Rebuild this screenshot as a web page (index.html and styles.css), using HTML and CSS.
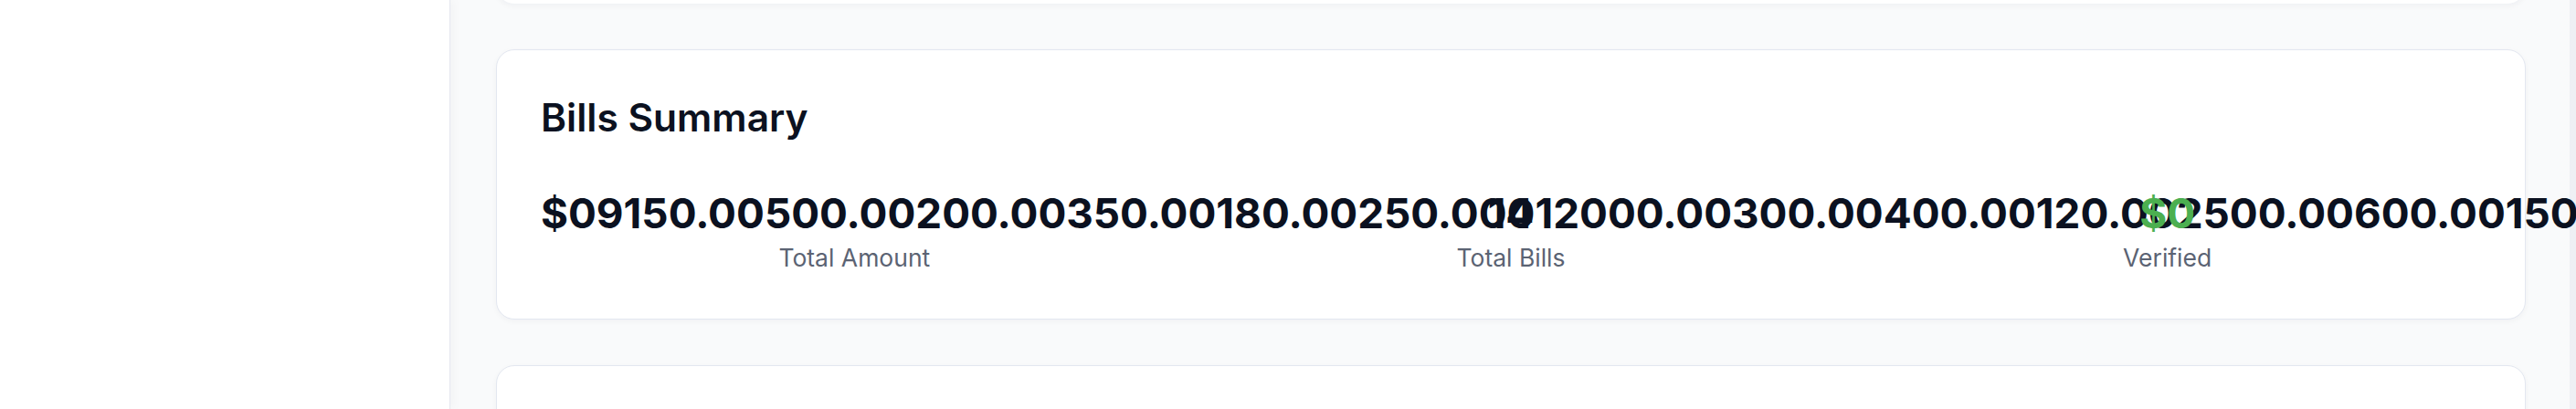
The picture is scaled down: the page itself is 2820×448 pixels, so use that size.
FILE: index.html
```html
<!DOCTYPE html>
<html lang="en">
<head>
<meta charset="utf-8">
<title>Bills Summary</title>
<link rel="stylesheet" href="styles.css">
</head>
<body>
<div class="layout">
  <aside class="sidebar"></aside>
  <main class="main">
    <section class="card card-prev"></section>
    <section class="card summary">
      <h2 class="card-title">Bills Summary</h2>
      <div class="stats">
        <div class="stat">
          <div class="stat-value">$09150.00500.00200.00350.00180.00250.00012000.00300.00400.00120.002500.00600.00150.00</div>
          <div class="stat-label">Total Amount</div>
        </div>
        <div class="stat">
          <div class="stat-value">14</div>
          <div class="stat-label">Total Bills</div>
        </div>
        <div class="stat">
          <div class="stat-value stat-green">$0</div>
          <div class="stat-label">Verified</div>
        </div>
      </div>
    </section>
    <section class="card card-next"></section>
  </main>
</div>
</body>
</html>
```
FILE: styles.css
```css
html, body {
  margin: 0;
  padding: 0;
  height: 100%;
  overflow: hidden;
}
body {
  font-family: Inter, "Noto Sans", sans-serif;
  background: #f9fafb;
  color: #0b1120;
}
.layout {
  display: flex;
  height: 100vh;
}
.sidebar {
  width: 492px;
  flex: 0 0 492px;
  background: #ffffff;
  border-right: 1px solid #e5e7ef;
  box-shadow: 2px 0 12px rgba(17, 24, 39, 0.04);
  position: relative;
  z-index: 1;
}
.main {
  flex: 1;
  min-width: 0;
  display: flex;
  flex-direction: column;
  padding: 0 48px 0 50px;
  border-right: 7px solid #eef0f4;
  background: #f9fafb;
}
.card {
  background: #ffffff;
  border: 1px solid #e3e7f0;
  border-radius: 20px;
  box-shadow: 0 2px 6px rgba(17, 24, 39, 0.04);
  flex-shrink: 0;
}
.card-prev {
  height: 100px;
  margin-top: -97px;
  border-color: #f1f3f6;
}
.summary {
  margin-top: 49px;
  padding: 48px;
}
.card-next {
  margin-top: 50px;
  height: 200px;
}
.card-title {
  margin: 0 0 53px;
  font-size: 42.5px;
  line-height: 1.2;
  font-weight: 600;
  letter-spacing: 0;
  color: #0b1120;
}
.stats {
  display: grid;
  grid-template-columns: repeat(3, 1fr);
  gap: 32px;
}
.stat {
  text-align: center;
  min-width: 0;
}
.stat-value {
  font-size: 45.8px;
  line-height: 1.18;
  font-weight: 700;
  color: #0b1120;
  white-space: nowrap;
}
.stat-green {
  color: #4caf50;
}
.stat-label {
  margin-top: 3px;
  font-size: 26.5px;
  line-height: 1.4;
  color: #5b6373;
}
```
